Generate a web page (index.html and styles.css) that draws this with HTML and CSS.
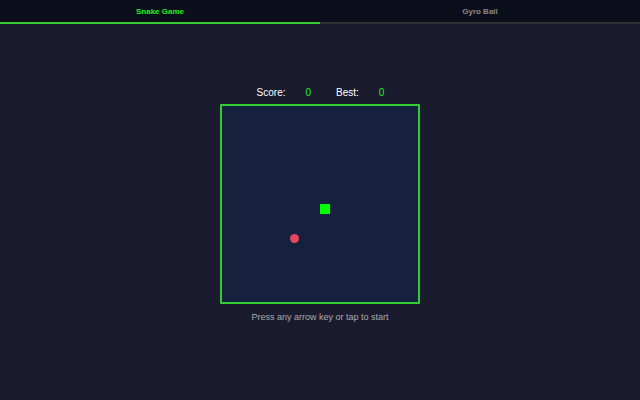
FILE: index.html
```html
<!DOCTYPE html>
<html lang="en">
<head>
    <meta charset="UTF-8">
    <meta name="viewport" content="width=device-width, initial-scale=1.0">
    <title>Games</title>
    <link rel="stylesheet" href="styles.css">
</head>
<body>
    <!-- Tabs for switching games -->
    <div class="tabs">
        <div class="tab active">Snake Game</div>
        <div class="tab">Gyro Ball</div>
    </div>

    <!-- Snake game area -->
    <div class="game">
        <div class="scoreboard">
            <span class="label">Score:</span>
            <span class="value">0</span>
            <span class="label best">Best:</span>
            <span class="value">0</span>
        </div>

        <div class="board">
            <div class="snake" style="left: 98px; top: 98px;"></div>
            <div class="food" style="left: 68px; top: 128px;"></div>
        </div>

        <p class="hint">Press any arrow key or tap to start</p>
    </div>
</body>
</html>
```

FILE: styles.css
```css
body {
    background-color: #1a1b2e;
    margin: 0;
    font-family: "Liberation Sans", Arial, sans-serif;
    color: #fff;
    overflow: hidden;
}

/* Tab bar */
.tabs {
    display: flex;
    background-color: #0d0e1b;
}

.tab {
    flex: 1;
    text-align: center;
    font-size: 8px;
    font-weight: bold;
    color: #888;
    height: 22px;
    line-height: 24px;
    border-bottom: 2px solid #333;
}

.tab.active {
    color: #22ee22;
    border-bottom-color: #33cc33;
}

/* Game column */
.game {
    display: flex;
    flex-direction: column;
    align-items: center;
    padding-top: 61px;
}

.scoreboard {
    display: flex;
    align-items: center;
    height: 14px;
    font-size: 10px;
    margin-bottom: 5px;
    padding-left: 1px;
}

.value {
    color: #22ee22;
    margin-left: 20px;
}

.label.best {
    margin-left: 25px;
}

/* Board, items placed on it like on a canvas */
.board {
    position: relative;
    width: 196px;
    height: 196px;
    background-color: #16213e;
    border: 2px solid #33cc33;
    border-radius: 1px;
}

.snake {
    position: absolute;
    width: 10px;
    height: 10px;
    background-color: #00ff00;
}

.food {
    position: absolute;
    width: 9px;
    height: 9px;
    border-radius: 50%;
    background-color: #e94560;
}

.hint {
    margin: 8px 0 0;
    font-size: 9px;
    color: #aaa;
}
```
